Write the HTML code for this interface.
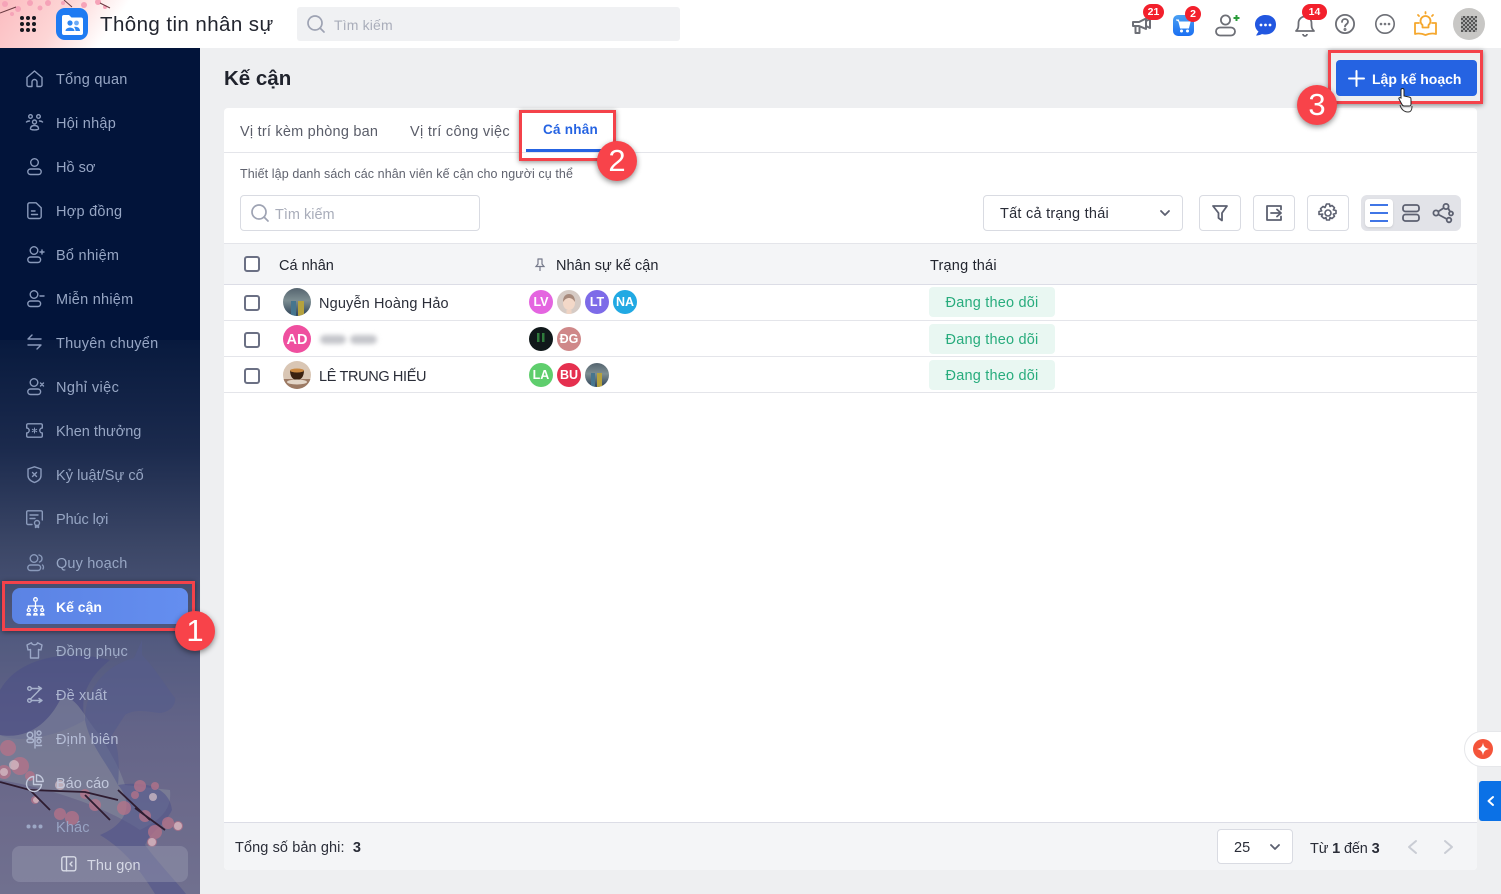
<!DOCTYPE html>
<html lang="vi"><head><meta charset="utf-8"><title>Kế cận</title>
<style>
*{box-sizing:border-box}
html,body{margin:0;padding:0}
body{width:1501px;height:894px;overflow:hidden;position:relative;background:#eeeff1;font-family:"Liberation Sans",sans-serif;color:#1d2130;font-size:14px}
.a{position:absolute}
.t{position:absolute;white-space:nowrap;line-height:20px}
svg{position:absolute;overflow:visible}
.m{position:absolute;left:56px;color:#97a6c4;font-size:14.5px;letter-spacing:.15px;line-height:20px;white-space:nowrap}
.i{fill:none;stroke:#8a9abb;stroke-width:1.4;stroke-linecap:round;stroke-linejoin:round}
.row{position:absolute;left:224px;width:1253px;height:1px;background:#e4e5ea}
.cb{position:absolute;left:244px;width:16px;height:16px;border:2px solid #6b7084;border-radius:3px;background:#fff}
.av{position:absolute;border-radius:50%;color:#fff;font-weight:bold;text-align:center;width:24px;height:24px;line-height:25px;font-size:12.5px;overflow:hidden}
.av2{width:28px;height:28px;line-height:31px;font-size:14.5px}
.st{position:absolute;left:929px;width:126px;height:30px;border-radius:4px;background:#e9f7f2;color:#28ac7d;text-align:center;line-height:32px;font-size:14.5px;letter-spacing:.2px}
.ib{position:absolute;top:195px;width:42px;height:36px;border:1px solid #d9dbe2;border-radius:4px;background:#fff}
.badge{position:absolute;background:#f3202c;color:#fff;font-weight:bold;font-size:10.5px;line-height:16px;height:16px;text-align:center;border-radius:8px}
.red{position:absolute;border:3px solid #f4424a;box-shadow:0 1px 5px rgba(0,0,0,.45)}
.num{position:absolute;width:40px;height:40px;border-radius:50%;background:#f8434a;color:#fff;font-size:31px;line-height:40px;text-align:center;box-shadow:0 2px 6px rgba(0,0,0,.45)}
</style></head><body>

<!-- header -->
<div class="a" style="left:0;top:0;width:1501px;height:48px;background:#fff"></div>
<div class="a" style="left:0;top:0;width:130px;height:48px;background:linear-gradient(125deg,#fbbcc0 0%,#fdd6d6 45%,#fff 80%)"></div>
<svg style="left:0;top:0" width="125" height="20">
<g fill="#f6a3b8"><circle cx="5" cy="4" r="3"/><circle cx="18" cy="9" r="3"/><circle cx="30" cy="3" r="3"/><circle cx="40" cy="8" r="2.5"/><circle cx="48" cy="3" r="3"/><circle cx="63" cy="3" r="2"/><circle cx="84" cy="5" r="3"/><circle cx="98" cy="2" r="3"/><circle cx="105" cy="7" r="2"/><circle cx="12" cy="14" r="2"/></g>
<path d="M0 13L16 7M64 0L72 7M100 3L110 8" stroke="#6a3a42" fill="none"/>
</svg>
<svg style="left:20px;top:16px" width="17" height="17" fill="#16181f"><circle cx="2" cy="2" r="2"/><circle cx="8" cy="2" r="2"/><circle cx="14" cy="2" r="2"/><circle cx="2" cy="8" r="2"/><circle cx="8" cy="8" r="2"/><circle cx="14" cy="8" r="2"/><circle cx="2" cy="14" r="2"/><circle cx="8" cy="14" r="2"/><circle cx="14" cy="14" r="2"/></svg>
<svg style="left:56px;top:8px" width="32" height="32"><rect width="32" height="32" rx="9" fill="#1f7bf2"/><path d="M6 9a2 2 0 0 1 2-2h5l2.500 2.500H25a2 2 0 0 1 2 2V25a2 2 0 0 1-2 2H8a2 2 0 0 1-2-2z" fill="#fff"/><circle cx="14" cy="15" r="2.600" fill="#2d86f3"/><circle cx="20.500" cy="15" r="2.400" fill="#6cabf7"/><path d="M9.500 23c0-4.500 9-4.500 9 0zM19.500 23c0-1.500-.5-3-1.500-4 2.500-.8 6 .5 6 4z" fill="#2d86f3"/></svg>
<div class="t" style="left:100px;top:13px;font-size:20.5px;line-height:24px;letter-spacing:.42px;color:#22252f">Thông tin nhân sự</div>
<div class="a" style="left:297px;top:7px;width:383px;height:34px;background:#f0f1f3;border-radius:3px"></div>
<svg style="left:307px;top:15px" width="18" height="18" fill="none" stroke="#9ea3b3" stroke-width="1.7" stroke-linecap="round"><circle cx="8" cy="8" r="7"/><path d="M13 13l4 4"/></svg>
<div class="t" style="left:334px;top:15px;color:#a9adba;font-size:14px;letter-spacing:.15px">Tìm kiếm</div>

<!-- header icons -->
<svg style="left:1132px;top:18px" width="20" height="17" fill="none" stroke="#6d6f76" stroke-width="2" stroke-linejoin="round"><path d="M1 4h6l7-3.500V11L7 8H1z"/><path d="M3.500 8v7h4V8"/><path d="M14 3l4-2v9l-4-2"/></svg>
<div class="badge" style="left:1143px;top:4px;width:21px">21</div>
<svg style="left:1173px;top:15px" width="21" height="21"><defs><linearGradient id="cg" x1="0" y1="0" x2="0" y2="1"><stop offset="0" stop-color="#4aa0f2"/><stop offset="1" stop-color="#1b6ff2"/></linearGradient></defs><rect width="21" height="21" rx="5" fill="url(#cg)"/><path d="M3 5h2.500l2 8h8l1.500-6H6" fill="#fff" stroke="#fff"/><circle cx="8.500" cy="16" r="1.500" fill="#fff"/><circle cx="14.500" cy="16" r="1.500" fill="#fff"/></svg>
<div class="badge" style="left:1185px;top:6px;width:16px">2</div>
<svg style="left:1215px;top:13px" width="26" height="23" fill="none" stroke="#6d6f76" stroke-width="1.800"><circle cx="10.500" cy="7" r="4.600"/><rect x="1" y="14.500" width="19" height="8" rx="4"/><path d="M18.500 5h6M21.500 2v6" stroke="#2a9c3a" stroke-width="2"/></svg>
<svg style="left:1255px;top:15px" width="21" height="21"><path d="M10.500 0C4.500 0 0 4 0 9.500c0 3 1.500 5.500 3.500 7L1 20.500c3 0 5-1 6-1.500 1 .3 2.300.5 3.500.5C16.500 19.500 21 15.500 21 9.500S16.500 0 10.500 0z" fill="#2257e0"/><circle cx="6" cy="10" r="1.400" fill="#fff"/><circle cx="10.500" cy="10" r="1.400" fill="#fff"/><circle cx="15" cy="10" r="1.400" fill="#fff"/></svg>
<svg style="left:1295px;top:13px" width="20" height="23" fill="none" stroke="#6d6f76" stroke-width="1.800"><path d="M1 18c2-2 2.500-3 2.500-8a6.500 6.500 0 0 1 13 0c0 5 .5 6 2.500 8z" stroke-linejoin="round"/><path d="M8 21a2 2 0 0 0 4 0"/></svg>
<div class="badge" style="left:1302px;top:4px;width:25px">14</div>
<svg style="left:1335px;top:14px" width="20" height="20" fill="none" stroke="#6d6f76" stroke-width="1.800" stroke-linecap="round"><circle cx="10" cy="10" r="9.100"/><path d="M7 8c0-4 6-4 6 0 0 2-3 2.500-3 4.500"/><circle cx="10" cy="15.500" r=".6"/></svg>
<svg style="left:1375px;top:14px" width="20" height="20" fill="none" stroke="#6d6f76" stroke-width="1.600"><circle cx="10" cy="10" r="9.200"/><circle cx="6" cy="10" r=".5"/><circle cx="10" cy="10" r=".5"/><circle cx="14" cy="10" r=".5"/></svg>
<svg style="left:1414px;top:12px" width="23" height="24" fill="none" stroke="#f5a72d" stroke-width="1.800" stroke-linejoin="round" stroke-linecap="round"><path d="M8.500 15.500v-2.500a5 5 0 1 1 6 0v2.500z"/><path d="M11.500 0v1.500M4 3l1 1M19 3l-1 1"/><path d="M5 11H1v11c4-1 7-.5 10.500 1C15 21.500 18 21 22 22V11h-4"/></svg>
<div class="a" style="left:1453px;top:8px;width:32px;height:32px;border-radius:50%;background:#c8c7c5;overflow:hidden"><div class="a" style="left:8px;top:8px;width:16px;height:16px;background:repeating-conic-gradient(#555 0 25%,#aaa 0 50%) 0 0/4px 4px"></div></div>

<!-- sidebar -->
<div class="a" style="left:0;top:48px;width:200px;height:846px;overflow:hidden;background:linear-gradient(180deg,#02143a 0,#02143a 292px,#081a3e 292px,#1b2a4d 400px,#3c4767 500px,#525a7f 590px,#636488 680px,#6c6a8b 760px,#70708f 846px)">
<svg style="left:0;top:0" width="200" height="846">
<g transform="translate(0,-48)">
<path d="M0 690C20 655 70 650 110 660C85 680 80 700 85 720C60 735 20 745 0 735Z" fill="#4a4f86" opacity=".55"/>
<path d="M60 700C75 690 85 720 100 735C115 760 120 770 125 785L170 790C172 810 160 820 140 830C110 810 60 790 0 780L0 735C30 740 50 720 60 700Z" fill="#858a9c" opacity=".55"/>
<path d="M142 640L134 658C105 665 85 690 85 720C90 745 105 760 118 785C120 760 118 745 112 735L125 715C135 708 150 712 160 713C170 712 176 705 175 698C165 685 155 668 142 655Z" fill="#555c8c" opacity=".6"/>
<path d="M118 785C150 780 170 790 172 810C165 825 150 832 145 845C160 865 175 880 186 894L155 894C140 870 125 850 100 835C125 825 135 805 118 785Z" fill="#4f528a" opacity=".55"/>
<g fill="#b77389" opacity=".75"><circle cx="8" cy="748" r="8"/><circle cx="20" cy="766" r="9"/><circle cx="4" cy="772" r="7"/><circle cx="30" cy="776" r="5"/><circle cx="35" cy="800" r="4"/><circle cx="85" cy="794" r="5"/><circle cx="95" cy="805" r="6"/><circle cx="60" cy="814" r="6"/><circle cx="72" cy="818" r="7"/><circle cx="124" cy="808" r="7"/><circle cx="140" cy="786" r="6"/><circle cx="135" cy="795" r="4"/><circle cx="155" cy="786" r="4"/><circle cx="145" cy="816" r="6"/><circle cx="168" cy="823" r="6"/><circle cx="155" cy="832" r="7"/><circle cx="178" cy="826" r="5"/><circle cx="152" cy="842" r="5"/></g>
<g fill="#d9c3ca" opacity=".7"><circle cx="14" cy="765" r="5"/><circle cx="4" cy="772" r="4"/><circle cx="153" cy="797" r="4"/><circle cx="178" cy="826" r="4"/><circle cx="152" cy="842" r="4"/><circle cx="36" cy="800" r="3"/><circle cx="60" cy="785" r="5"/></g>
<path d="M0 782L30 790L50 810M30 790L85 792L118 800M85 795L110 820M118 790L150 820M135 808L165 830" stroke="#2e1c30" stroke-width="1.800" fill="none"/>
</g>
</svg>
</div>

<!-- menu icons -->
<svg class="i" style="left:26px;top:70px" width="17" height="17"><path d="M1 7.500L8.500 1 16 7.500V15a1.500 1.500 0 0 1-1.500 1.500H11V12a2.500 2.500 0 0 0-5 0v4.500H2.500A1.500 1.500 0 0 1 1 15z"/></svg>
<svg class="i" style="left:26px;top:114px" width="17" height="17"><circle cx="4.500" cy="2.500" r="1.800"/><circle cx="12.500" cy="2.500" r="1.800"/><circle cx="8.500" cy="8" r="2"/><path d="M0.500 8c1-1 2-1 3-1M16.500 8c-1-1-2-1-3-1M4.500 15c0-2.500 1.500-3.500 4-3.500s4 1 4 3.500c-2 1.300-6 1.300-8 0z"/></svg>
<svg class="i" style="left:27px;top:158px" width="15" height="17"><circle cx="7.500" cy="4.500" r="3.800"/><rect x=".8" y="11" width="13.400" height="5.500" rx="2.750"/></svg>
<svg class="i" style="left:27px;top:202px" width="15" height="17"><path d="M2.500 .8H9l5.200 5V14.500a2 2 0 0 1-2 2H2.800a2 2 0 0 1-2-2V2.800a2 2 0 0 1 1.700-2z"/><path d="M4.500 9H8M4.500 12.500H10.500"/></svg>
<svg class="i" style="left:27px;top:246px" width="17" height="17"><circle cx="7" cy="4.500" r="3.800"/><rect x=".8" y="11" width="12.800" height="5.500" rx="2.750"/><path d="M13 6h4M15 4v4"/></svg>
<svg class="i" style="left:27px;top:290px" width="17" height="17"><circle cx="7" cy="4.500" r="3.800"/><rect x=".8" y="11" width="12.800" height="5.500" rx="2.750"/><path d="M13 6h4"/></svg>
<svg class="i" style="left:27px;top:334px" width="15" height="16"><path d="M5 1L1 5h13M10 15l4-4H1"/></svg>
<svg class="i" style="left:27px;top:378px" width="17" height="17"><circle cx="7" cy="4.500" r="3.800"/><rect x=".8" y="11" width="12.800" height="5.500" rx="2.750"/><path d="M13.500 5l3 3M16.500 5l-3 3"/></svg>
<svg class="i" style="left:26px;top:423px" width="17" height="15"><path d="M2 .8h13a1.300 1.300 0 0 1 1.300 1.300V5a2.500 2.500 0 0 0 0 5v2.900a1.300 1.300 0 0 1-1.300 1.300H2a1.300 1.300 0 0 1-1.300-1.300V10a2.500 2.500 0 0 0 0-5V2.100A1.300 1.300 0 0 1 2 .8z"/><path d="M8.500 5v5M6.300 6.300l4.400 2.400M10.700 6.300L6.300 8.700" stroke-width="1"/></svg>
<svg class="i" style="left:27px;top:466px" width="15" height="17"><path d="M7.500 .8L14 3v6.500c0 3.500-3 5.800-6.500 7C4 15.300 1 13 1 9.500V3z"/><path d="M5.500 6.500l4 4M9.500 6.500l-4 4"/></svg>
<svg class="i" style="left:26px;top:510px" width="17" height="18"><path d="M6 14.500H2a1.300 1.300 0 0 1-1.300-1.300V2A1.300 1.300 0 0 1 2 .8h13A1.300 1.300 0 0 1 16.300 2v8"/><path d="M4 5h8M4 8.500h5"/><circle cx="11" cy="13" r="2.500"/><path d="M9.500 15.500v2l1.500-.8 1.500.8v-2"/></svg>
<svg class="i" style="left:27px;top:554px" width="17" height="17"><circle cx="7" cy="4.500" r="3.800"/><rect x=".8" y="11" width="12.800" height="5.500" rx="2.750"/><path d="M12 1c2 .5 3 2 3 3.500S14 7.500 12.500 8M15.500 11c1 .8 1.300 2.500 .5 4"/></svg>

<!-- menu labels -->
<div class="m" style="top:70px;letter-spacing:.25px">Tổng quan</div>
<div class="m" style="top:114px;letter-spacing:.25px">Hội nhập</div>
<div class="m" style="top:158px;letter-spacing:0">Hồ sơ</div>
<div class="m" style="top:202px;letter-spacing:.25px">Hợp đồng</div>
<div class="m" style="top:246px;letter-spacing:.25px">Bổ nhiệm</div>
<div class="m" style="top:290px;letter-spacing:.25px">Miễn nhiệm</div>
<div class="m" style="top:334px;letter-spacing:.25px">Thuyên chuyển</div>
<div class="m" style="top:378px;letter-spacing:.4px">Nghỉ việc</div>
<div class="m" style="top:422px;letter-spacing:0">Khen thưởng</div>
<div class="m" style="top:466px;letter-spacing:.05px">Kỷ luật/Sự cố</div>
<div class="m" style="top:510px;letter-spacing:-.1px">Phúc lợi</div>
<div class="m" style="top:554px">Quy hoạch</div>

<div class="a" style="left:12px;top:588px;width:176px;height:36px;border-radius:8px;background:linear-gradient(90deg,#5b83e4,#648ef0)"></div>
<svg style="left:26px;top:597px" fill="none" stroke="#fff" stroke-width="1.300" width="19" height="19"><circle cx="9.500" cy="2.500" r="1.800"/><path d="M9.500 5v4M2.500 11V9h14v2M9.500 9v2"/><circle cx="2.800" cy="13" r="1.500"/><circle cx="9.500" cy="13" r="1.500"/><circle cx="16.200" cy="13" r="1.500"/><path d="M1 18c0-2 3.500-2 3.500 0zM7.700 18c0-2 3.500-2 3.500 0zM14.500 18c0-2 3.500-2 3.500 0z"/></svg>
<div class="m" style="top:597px;color:#fff;font-weight:bold;font-size:14px;letter-spacing:0">Kế cận</div>

<svg class="i" style="left:26px;top:642px;stroke:#9aa6c6" width="17" height="17"><path d="M5.500 .8L1 3l1 5 2.500-.5V16h8V7.500L15 8l1-5L11.500 .8C11 3.500 6 3.500 5.500 .8z"/></svg>
<div class="m" style="top:642px;color:#a2aeca;letter-spacing:.2px">Đồng phục</div>
<svg class="i" style="left:27px;top:686px;stroke:#a7b2cc" width="16" height="17"><circle cx="2.500" cy="2.500" r="1.800"/><circle cx="2.500" cy="14.500" r="1.800"/><path d="M4.500 2.500h10M11.500 .5l3 2-3 2M4.500 14.500h10M12 12.500l3 2-3 2M14 2.500L3 13.500"/></svg>
<div class="m" style="top:686px;color:#adb6d0">Đề xuất</div>
<svg class="i" style="left:26px;top:730px;stroke:#acb5cf" width="18" height="18"><circle cx="4" cy="5" r="2.800"/><rect x="1" y="9" width="6.500" height="3.500" rx="1.700"/><circle cx="13" cy="3" r="2"/><circle cx="13" cy="11" r="2"/><path d="M10.500 7.500h5M10.500 15.500h5M9 1v17" /></svg>
<div class="m" style="top:730px;color:#b5bdd6">Định biên</div>
<svg class="i" style="left:26px;top:774px;stroke:#c3c9dc" width="18" height="18"><path d="M7.500 2.500a7.500 7.500 0 1 0 8 8h-8z"/><path d="M10.500 .8a7 7 0 0 1 6.700 6.700h-6.700z"/></svg>
<div class="m" style="top:774px;color:#c2c8dc;letter-spacing:0">Báo cáo</div>
<svg style="left:26px;top:824px" fill="#9ca7c5" width="17" height="5"><circle cx="2.500" cy="2.500" r="2"/><circle cx="8.500" cy="2.500" r="2"/><circle cx="14.500" cy="2.500" r="2"/></svg>
<div class="m" style="top:818px;color:#98a3c3">Khác</div>
<div class="a" style="left:12px;top:846px;width:176px;height:36px;border-radius:8px;background:rgba(155,158,178,.42)"></div>
<svg class="i" style="left:61px;top:856px;stroke:#d8dbe6" width="16" height="16"><rect x=".8" y=".8" width="14" height="14" rx="2"/><path d="M5.500 1v14M11 6L9 8l2 2"/></svg>
<div class="m" style="left:87px;top:856px;color:#d5d8e5;letter-spacing:.05px">Thu gọn</div>

<!-- page title -->
<div class="t" style="left:224px;top:67px;font-size:20.5px;line-height:24px;font-weight:bold;color:#20232d">Kế cận</div>

<!-- primary btn -->
<div class="a" style="left:1336px;top:60px;width:141px;height:36px;border-radius:4px;background:#2563e2"></div>
<svg style="left:1348px;top:70px" width="17" height="17" stroke="#fff" stroke-width="2" stroke-linecap="round"><path d="M8.500 1v15M1 8.500h15"/></svg>
<div class="t" style="left:1372px;top:69px;color:#fff;font-weight:bold;font-size:14px">Lập kế hoạch</div>

<!-- card -->
<div class="a" style="left:224px;top:108px;width:1253px;height:762px;background:#fff;border-radius:4px"></div>
<div class="row" style="top:152px;background:#e4e5ea"></div>
<div class="t" style="left:240px;top:122px;font-size:14.5px;color:#5a5d69;letter-spacing:.22px">Vị trí kèm phòng ban</div>
<div class="t" style="left:410px;top:122px;font-size:14.5px;color:#5a5d69;letter-spacing:.3px">Vị trí công việc</div>
<div class="t" style="left:543px;top:120px;font-weight:bold;color:#2563e2;font-size:13.5px;letter-spacing:.25px">Cá nhân</div>
<div class="a" style="left:526px;top:149px;width:90px;height:3px;background:#2563e2"></div>
<div class="t" style="left:240px;top:164px;font-size:12.5px;color:#5f626e;letter-spacing:.09px">Thiết lập danh sách các nhân viên kế cận cho người cụ thể</div>

<div class="a" style="left:240px;top:195px;width:240px;height:36px;border:1px solid #d9dbe2;border-radius:4px"></div>
<svg style="left:251px;top:204px" width="18" height="18" fill="none" stroke="#9ea3b3" stroke-width="1.700" stroke-linecap="round"><circle cx="8" cy="8" r="7"/><path d="M13 13l4 4"/></svg>
<div class="t" style="left:275px;top:205px;color:#a9adba;font-size:14.5px">Tìm kiếm</div>

<div class="a" style="left:983px;top:195px;width:200px;height:36px;border:1px solid #d9dbe2;border-radius:4px"></div>
<div class="t" style="left:1000px;top:204px;font-size:14.5px;color:#2a2d38;letter-spacing:.25px">Tất cả trạng thái</div>
<svg style="left:1160px;top:210px" width="10" height="6" fill="none" stroke="#5c6070" stroke-width="1.800" stroke-linecap="round" stroke-linejoin="round"><path d="M1 1l4 4 4-4"/></svg>

<div class="ib" style="left:1199px"></div>
<svg style="left:1212px;top:205px" width="16" height="16" fill="none" stroke="#5c6070" stroke-width="1.800" stroke-linejoin="round"><path d="M1 1h14L10 8v7.500L6.500 13V8z"/></svg>
<div class="ib" style="left:1253px"></div>
<svg style="left:1266px;top:205px" width="16" height="16" fill="none" stroke="#5c6070" stroke-width="1.800" stroke-linecap="round" stroke-linejoin="round"><path d="M15 4.500V1H1v14h14v-3.500M5 8h10M11 4.500L15 8l-4 3.500"/></svg>
<div class="ib" style="left:1307px"></div>
<svg style="left:1318px;top:203px" width="20" height="20" fill="none" stroke="#5c6070" stroke-width="1.600" stroke-linejoin="round"><circle cx="10" cy="10" r="3"/><path d="M8.500 1h3l.5 2.500 2-1 2.500 2.200-1.200 2.200 2.700.6v3l-2.700.6 1.200 2.200-2.500 2.200-2-1-.5 2.500h-3l-.5-2.500-2 1-2.500-2.200 1.200-2.200L1 11.500v-3l2.700-.6-1.200-2.200L5 3.500l2 1z"/></svg>
<div class="a" style="left:1361px;top:195px;width:100px;height:36px;border-radius:6px;background:#e2e3e8"></div>
<div class="a" style="left:1365px;top:199px;width:28px;height:28px;border-radius:4px;background:#fff;box-shadow:0 1px 2px rgba(0,0,0,.1)"></div>
<svg style="left:1370px;top:204px" width="18" height="18" stroke="#2563e2" stroke-width="1.800"><path d="M0 1h18M0 9h18M0 17h18"/></svg>
<svg style="left:1402px;top:204px" width="18" height="18" fill="none" stroke="#5c6070" stroke-width="1.800"><rect x="1" y="1" width="16" height="6.500" rx="2.500"/><rect x="1" y="10.500" width="16" height="6.500" rx="2.500"/></svg>
<svg style="left:1432px;top:203px" width="22" height="20" fill="none" stroke="#5c6070" stroke-width="1.800"><circle cx="4" cy="10" r="2.600"/><circle cx="14" cy="3.500" r="2.600"/><circle cx="19" cy="10.500" r="2"/><circle cx="17" cy="17" r="2.300"/><path d="M6.300 8.500l5.400-3.500M16 5l2 3.500M6.300 11.500l8.500 4.500"/></svg>

<!-- table header -->
<div class="a" style="left:224px;top:243px;width:1253px;height:42px;background:#f4f5f7;border-top:1px solid #e4e5ea;border-bottom:1px solid #dcdde6"></div>
<div class="cb" style="top:256px"></div>
<div class="t" style="left:279px;top:256px;font-size:14.500px;color:#22252f">Cá nhân</div>
<svg style="left:535px;top:258px" width="10" height="14" fill="none" stroke="#75798a" stroke-width="1.200"><path d="M2.500 1h5M3 1v5L1 8.500h8L7 6V1M5 8.500V13"/></svg>
<div class="t" style="left:556px;top:256px;font-size:14.500px;color:#22252f">Nhân sự kế cận</div>
<div class="t" style="left:930px;top:256px;font-size:14.500px;color:#22252f;letter-spacing:.2px">Trạng thái</div>

<!-- rows -->
<div class="row" style="top:320px"></div>
<div class="row" style="top:356px"></div>
<div class="row" style="top:392px"></div>
<div class="cb" style="top:295px"></div>
<div class="cb" style="top:332px"></div>
<div class="cb" style="top:368px"></div>

<div class="av av2" style="left:283px;top:288px;background:linear-gradient(180deg,#55646f 0,#7d8e92 45%,#2e4257 100%)"><svg style="left:8px;top:10px" width="14" height="18"><rect x="0" y="3" width="5" height="15" fill="#46758e"/><rect x="7" y="3" width="6" height="15" fill="#b5a23e"/></svg></div>
<div class="t" style="left:319px;top:294px;font-size:14.500px;color:#2a2d38;letter-spacing:.15px">Nguyễn Hoàng Hảo</div>
<div class="av av2" style="left:283px;top:325px;background:#ef4f9f">AD</div>
<div class="a" style="left:320px;top:335px;width:26px;height:9px;background:#c4c5ca;border-radius:5px;filter:blur(2.500px)"></div>
<div class="a" style="left:350px;top:335px;width:27px;height:9px;background:#c4c5ca;border-radius:5px;filter:blur(2.500px)"></div>
<div class="av av2" style="left:283px;top:361px;background:#d9c6b4"><svg style="left:0;top:0" width="28" height="28"><rect y="18" width="28" height="10" fill="#9c7a64"/><path d="M7 9h14c0 7-3 10-7 10s-7-3-7-10z" fill="#3a2110"/><ellipse cx="14" cy="9.500" rx="7" ry="2" fill="#c9873f"/><ellipse cx="14" cy="21" rx="10" ry="2.500" fill="#e3d6c8"/></svg></div>
<div class="t" style="left:319px;top:367px;font-size:14.500px;color:#2a2d38;letter-spacing:-.35px">LÊ TRUNG HIẾU</div>

<div class="av" style="left:529px;top:290px;background:#e465e0">LV</div>
<div class="av" style="left:557px;top:290px;background:#d6cbc5"><svg style="left:0;top:0" width="24" height="24"><ellipse cx="12" cy="13" rx="6" ry="7" fill="#f3d8c8"/><path d="M6 12c0-6 3-8 6-8s6 2 6 8c-2-3-4-4-6-4s-4 1-6 4z" fill="#a88a7c"/><rect x="9.500" y="20" width="5" height="4" fill="#f0d4c4"/></svg></div>
<div class="av" style="left:585px;top:290px;background:#7d6be8">LT</div>
<div class="av" style="left:613px;top:290px;background:#21a9e3">NA</div>
<div class="av" style="left:529px;top:327px;background:#10181a"><svg style="left:8px;top:6px" width="8" height="10" fill="#2f7a3c"><rect width="2.500" height="9"/><rect x="5" width="2.500" height="9"/></svg></div>
<div class="av" style="left:557px;top:327px;background:#cf8889">ĐG</div>
<div class="av" style="left:529px;top:363px;background:#5fce6d">LA</div>
<div class="av" style="left:557px;top:363px;background:#e5304f">BU</div>
<div class="av" style="left:585px;top:363px;background:linear-gradient(180deg,#55646f 0,#7d8e92 45%,#2e4257 100%)"><svg style="left:6px;top:8px" width="12" height="16"><rect x="0" y="2" width="4" height="14" fill="#46758e"/><rect x="6" y="2" width="5" height="14" fill="#b5a23e"/></svg></div>

<div class="st" style="top:287px">Đang theo dõi</div>
<div class="st" style="top:324px">Đang theo dõi</div>
<div class="st" style="top:360px">Đang theo dõi</div>

<!-- footer -->
<div class="a" style="left:224px;top:822px;width:1253px;height:48px;background:#f4f5f7;border-top:1px solid #dcdde6;border-radius:0 0 4px 4px"></div>
<div class="t" style="left:235px;top:838px;font-size:14.500px;color:#2a2d38;letter-spacing:.1px">Tổng số bản ghi:&nbsp; <b>3</b></div>
<div class="a" style="left:1217px;top:829px;width:76px;height:35px;background:#fff;border:1px solid #d9dbe2;border-radius:4px"></div>
<div class="t" style="left:1234px;top:838px;font-size:14.500px;color:#2a2d38">25</div>
<svg style="left:1270px;top:844px" width="10" height="6" fill="none" stroke="#5c6070" stroke-width="1.800" stroke-linecap="round" stroke-linejoin="round"><path d="M1 1l4 4 4-4"/></svg>
<div class="t" style="left:1310px;top:839px;font-size:14.500px;color:#2a2d38;letter-spacing:-.15px">Từ <b>1</b> đến <b>3</b></div>
<svg style="left:1407px;top:840px" width="10" height="14" fill="none" stroke="#c9ccd4" stroke-width="2" stroke-linecap="round" stroke-linejoin="round"><path d="M9 1L2 7l7 6"/></svg>
<svg style="left:1444px;top:840px" width="10" height="14" fill="none" stroke="#c9ccd4" stroke-width="2" stroke-linecap="round" stroke-linejoin="round"><path d="M1 1l7 6-7 6"/></svg>

<!-- floating -->
<div class="a" style="left:1464px;top:731px;width:50px;height:36px;border-radius:18px 0 0 18px;background:#fff;border:1px solid #e6e7ea"></div>
<svg style="left:1473px;top:739px" width="20" height="20"><circle cx="10" cy="10" r="10" fill="#f4543a"/><path d="M10 3.500c.6 4 2 5.600 6 6.500-4 .9-5.400 2.500-6 6.500-.6-4-2-5.600-6-6.500 4-.9 5.400-2.500 6-6.500z" fill="#fff"/></svg>
<div class="a" style="left:1479px;top:781px;width:22px;height:40px;background:#0b71e6;border-radius:3px 0 0 3px"></div>
<svg style="left:1487px;top:796px" width="7" height="10" fill="none" stroke="#fff" stroke-width="2" stroke-linecap="round" stroke-linejoin="round"><path d="M6 1L1.500 5 6 9"/></svg>

<!-- annotations -->
<div class="red" style="left:2px;top:581px;width:193px;height:50px"></div>
<div class="num" style="left:175px;top:611px">1</div>
<div class="red" style="left:519px;top:110px;width:97px;height:51px"></div>
<div class="num" style="left:597px;top:141px">2</div>
<div class="red" style="left:1328px;top:50px;width:155px;height:54px"></div>
<div class="num" style="left:1297px;top:85px">3</div>
<svg style="left:1398px;top:88px" width="16" height="26"><path d="M3 2a1.500 1.500 0 0 1 3 0v6l5 1c2 .5 2 1 2 3v4c0 2-1 2-2 2H6c-1 0-1.500-.5-2-1.500L1 11c-.5-1 .5-2 2-1z" fill="#fff" stroke="#222" stroke-width="1"/><path d="M2 17c1 4 4 7 8 7 3 0 4-2 4-6" fill="none" stroke="#333" stroke-width="1"/></svg>

</body></html>
